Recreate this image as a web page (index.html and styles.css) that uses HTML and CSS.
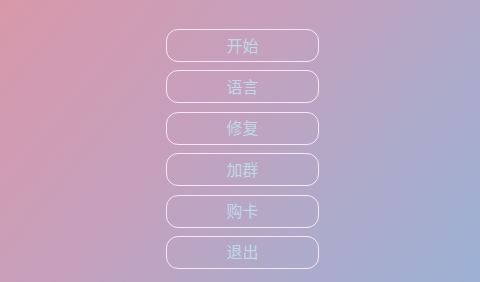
FILE: index.html
```html
<!DOCTYPE html>
<html lang="zh">
<head>
    <meta charset="UTF-8">
    <meta name="viewport" content="width=device-width, initial-scale=1.0">
    <title>菜单</title>
    <link rel="stylesheet" href="styles.css">
</head>
<body>
    <div class="menu">
        <button class="menu-btn">开始</button>
        <button class="menu-btn">语言</button>
        <button class="menu-btn">修复</button>
        <button class="menu-btn">加群</button>
        <button class="menu-btn">购卡</button>
        <button class="menu-btn">退出</button>
    </div>
</body>
</html>
```

FILE: styles.css
```css
* {
    margin: 0;
    padding: 0;
    box-sizing: border-box;
}

html, body {
    width: 480px;
    height: 282px;
    overflow: hidden;
}

body {
    font-family: "Noto Sans CJK SC", "Noto Sans", sans-serif;
    background: linear-gradient(130deg, #d898aa 0%, #c6a0bc 40%, #afaaca 70%, #9cb1d4 100%);
    display: flex;
    justify-content: center;
    padding: 29px 0 0 5px;
}

.menu {
    display: flex;
    flex-direction: column;
    gap: 8.4px;
    width: 153px;
}

.menu-btn {
    height: 33px;
    padding-bottom: 2px;
    border: 1.4px solid rgba(252, 232, 248, 0.95);
    border-radius: 12px;
    background: transparent;
    color: #c2d8e6;
    font-family: inherit;
    font-size: 16px;
    line-height: 1;
    cursor: pointer;
}
```
